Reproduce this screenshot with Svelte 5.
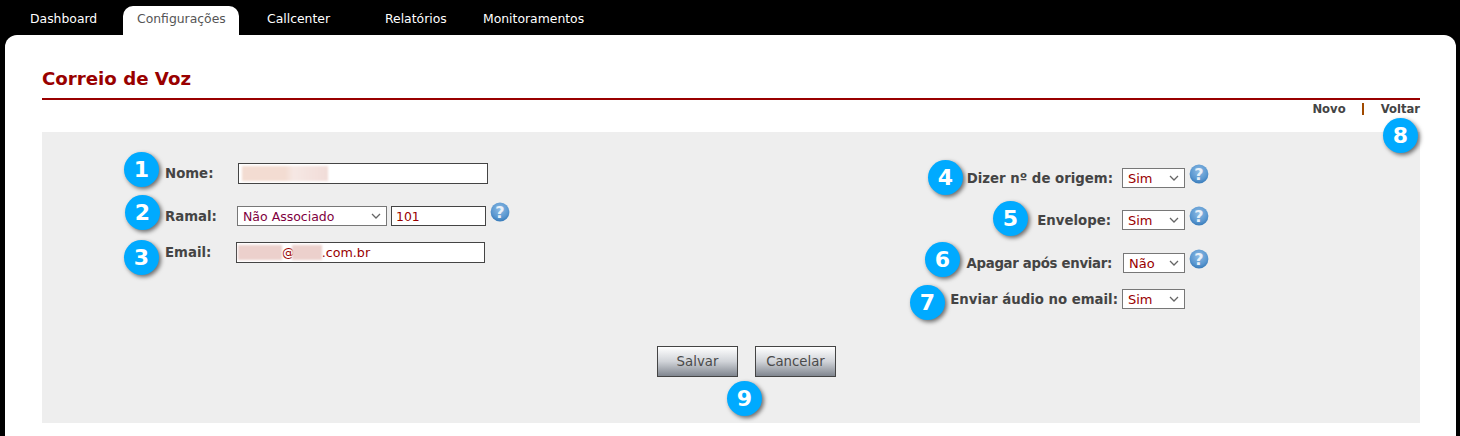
<script>
  const tabs = [
    { label: 'Dashboard', width: 123, pad: 30 },
    { label: 'Configurações', width: 116, pad: 14, active: true },
    { label: 'Callcenter', width: 118, pad: 28 },
    { label: 'Relatórios', width: 126, pad: 28 },
    { label: 'Monitoramentos', width: 160, pad: 0 }
  ];

  const badges = [
    { n: 1, x: 124, y: 152 },
    { n: 2, x: 125, y: 195 },
    { n: 3, x: 124, y: 240 },
    { n: 4, x: 928, y: 160 },
    { n: 5, x: 993, y: 201 },
    { n: 6, x: 925, y: 242 },
    { n: 7, x: 910, y: 285 },
    { n: 8, x: 1383, y: 118 },
    { n: 9, x: 727, y: 381 }
  ];
</script>

{#snippet help()}
  <svg class="help" width="20" height="20" viewBox="0 0 20 20">
    <defs>
      <radialGradient id="sphere" cx="50%" cy="35%" r="70%">
        <stop offset="0" stop-color="#8dbbe4" />
        <stop offset="0.65" stop-color="#5a97d0" />
        <stop offset="1" stop-color="#2f74b4" />
      </radialGradient>
    </defs>
    <circle cx="10" cy="10" r="9.4" fill="url(#sphere)" />
    <text x="10" y="15.5" text-anchor="middle" class="mark">?</text>
  </svg>
{/snippet}

<div class="page">
  <nav class="tabs">
    {#each tabs as tab}
      <a class="tab" class:active={tab.active} style="width: {tab.width}px; padding-left: {tab.pad}px">{tab.label}</a>
    {/each}
  </nav>

  <main class="panel">
    <h1>Correio de Voz</h1>
    <div class="actions">
      <a>Novo</a>
      <span class="sep"></span>
      <a>Voltar</a>
    </div>

    <form class="box">
      <div class="columns">
        <div class="left">
          <div class="row nome">
            <label>Nome:</label>
            <div class="field wide dark"><span class="blur b1"></span></div>
          </div>
          <div class="row ramal">
            <label>Ramal:</label>
            <select class="assoc"><option>Não Associado</option></select>
            <input class="field num" value="101" />
            {@render help()}
          </div>
          <div class="row email">
            <label>Email:</label>
            <div class="field mail dark"><span class="blur b2"></span>@<span class="blur b3"></span>.com.br</div>
          </div>
        </div>

        <div class="right">
          <div class="row r1">
            <label>Dizer nº de origem:</label>
            <select><option>Sim</option></select>
            {@render help()}
          </div>
          <div class="row r2">
            <label>Envelope:</label>
            <select><option>Sim</option></select>
            {@render help()}
          </div>
          <div class="row r3">
            <label>Apagar após enviar:</label>
            <select class="nao"><option>Não</option></select>
            {@render help()}
          </div>
          <div class="row r4">
            <label>Enviar áudio no email:</label>
            <select><option>Sim</option></select>
          </div>
        </div>
      </div>

      <div class="buttons">
        <button type="button">Salvar</button>
        <button type="button">Cancelar</button>
      </div>
    </form>
  </main>

  {#each badges as b}
    <div class="badge" style="left: {b.x}px; top: {b.y}px">{b.n}</div>
  {/each}
</div>

<style>
  :global(body) {
    margin: 0;
    background: #000;
  }

  .page {
    position: relative;
    height: 436px;
    overflow: hidden;
    background: #000;
    font-family: "DejaVu Sans", Verdana, sans-serif;
  }

  .tabs {
    display: flex;
    height: 35px;
    padding-top: 6px;
    box-sizing: border-box;
  }

  .tab {
    flex: none;
    box-sizing: border-box;
    height: 29px;
    line-height: 25px;
    font-size: 12.4px;
    color: #fff;
  }

  .tab.active {
    background: #fff;
    color: #555;
    border-radius: 10px 10px 0 0;
  }

  .panel {
    margin: 0 4px 0 5px;
    height: 401px;
    padding: 0 36px 0 37px;
    box-sizing: border-box;
    background: #fff;
    border-radius: 12px 12px 0 0;
  }

  h1 {
    margin: 0;
    padding-top: 33px;
    height: 30px;
    border-bottom: 2px solid #990000;
    font-size: 18.2px;
    line-height: 22px;
    font-weight: bold;
    color: #990000;
  }

  .actions {
    display: flex;
    justify-content: flex-end;
    align-items: center;
    height: 32px;
    padding-bottom: 14px;
    box-sizing: border-box;
    font-size: 11.6px;
    font-weight: bold;
    color: #444;
  }

  .sep {
    width: 2px;
    height: 12px;
    margin: 0 17px 0 16px;
    background: #a04a00;
  }

  .box {
    height: 291px;
    padding-top: 31px;
    box-sizing: border-box;
    background: #eee;
  }

  .columns {
    display: flex;
    justify-content: space-between;
    height: 183px;
  }

  .left {
    width: 390px;
    margin-left: 123px;
  }

  .right {
    width: 340px;
    margin-right: 211px;
    padding-top: 5px;
  }

  .row {
    display: flex;
    align-items: flex-start;
  }

  .right .row {
    justify-content: flex-end;
  }

  label {
    padding-top: 1px;
    font-size: 13.3px;
    line-height: 20px;
    font-weight: bold;
    color: #444;
    white-space: nowrap;
  }

  .left label {
    width: 73px;
  }

  .right label {
    margin-right: 9px;
  }

  .field {
    box-sizing: border-box;
    border: 1px solid #444;
    background: #fff;
    color: #990000;
    font: 12.7px/19px "DejaVu Sans", sans-serif;
    padding: 0 4px;
    outline: none;
  }

  .dark {
    display: flex;
    align-items: center;
  }

  .wide {
    width: 250px;
    height: 21px;
  }

  .mail {
    width: 249px;
    height: 21px;
    padding-left: 1px;
    white-space: nowrap;
  }

  .blur {
    display: block;
    height: 15px;
    background: #ecd0cc;
    filter: blur(1.2px);
  }

  .b1 {
    width: 86px;
    margin-left: -1px;
    background: linear-gradient(90deg, #f3dcd2 50%, #f6e8e4 60%, #f1dcd8);
  }

  .b2 {
    width: 44px;
  }

  .b3 {
    width: 30px;
    margin-left: -3px;
  }

  select {
    appearance: none;
    box-sizing: border-box;
    width: 63px;
    height: 20px;
    padding: 0 0 0 5px;
    border: 1px solid #777;
    border-radius: 0;
    background: #fff url("data:image/svg+xml,%3Csvg xmlns='http://www.w3.org/2000/svg' width='10' height='6'%3E%3Cpath d='M1 1l4 4 4-4' fill='none' stroke='%23666' stroke-width='1.3'/%3E%3C/svg%3E") no-repeat right 5px center;
    color: #990000;
    font: 13px "DejaVu Sans", sans-serif;
  }

  .assoc {
    width: 150px;
    margin-left: -1px;
    color: #800040;
    font-size: 12.5px;
  }

  .num {
    width: 95px;
    height: 20px;
    margin-left: 4px;
    font-size: 12.4px;
  }

  .help {
    margin: -4px 0 0 4px;
    flex: none;
  }

  .mark {
    font: bold 16px "DejaVu Sans", sans-serif;
    fill: #e8f0f8;
  }

  .nome {
    height: 43px;
  }

  .ramal {
    height: 36px;
  }

  .email .mail {
    margin-left: -2px;
  }

  .r1 {
    height: 42px;
  }

  .r2 {
    height: 43px;
  }

  .r2 label {
    margin-right: 11px;
  }

  .r3 {
    height: 36px;
  }

  .r3 label {
    letter-spacing: -0.3px;
    margin-right: 11px;
  }

  .r4 {
    padding-right: 24px;
  }

  .r3 select {
    width: 62px;
  }

  .r4 label {
    margin-right: 4px;
  }

  .buttons {
    display: flex;
    justify-content: center;
    gap: 17px;
    padding-left: 31px;
  }

  button {
    box-sizing: border-box;
    width: 81px;
    height: 31px;
    padding: 0;
    border: 1px solid #444;
    background: linear-gradient(#fff, #d0d3d8 50%, #80868f);
    color: #4a4a4a;
    font: 13.3px "DejaVu Sans", sans-serif;
  }

  .badge {
    position: absolute;
    width: 35px;
    height: 35px;
    border-radius: 50%;
    background: #00aaff;
    box-shadow: 2px 2px 4px rgba(0, 0, 0, 0.55);
    color: #fff;
    font-size: 22px;
    font-weight: bold;
    line-height: 35px;
    text-align: center;
  }
</style>
